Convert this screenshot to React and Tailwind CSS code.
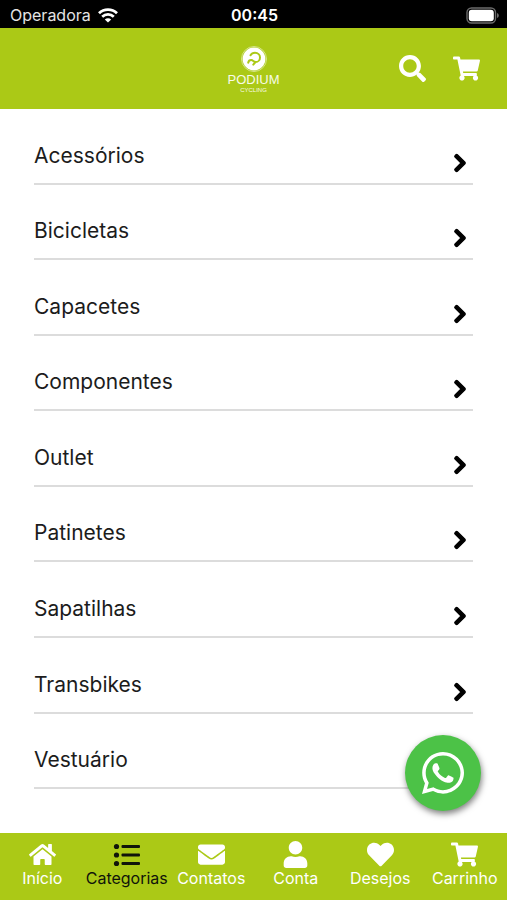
import { useState } from "react";
import {
  FaChevronRight,
  FaEnvelope,
  FaHeart,
  FaHome,
  FaSearch,
  FaShoppingCart,
  FaUser,
  FaWhatsapp,
} from "react-icons/fa";

const categories = [
  "Acessórios",
  "Bicicletas",
  "Capacetes",
  "Componentes",
  "Outlet",
  "Patinetes",
  "Sapatilhas",
  "Transbikes",
  "Vestuário",
];

const tabs = [
  { label: "Início", Icon: FaHome },
  { label: "Categorias", Icon: ListIcon },
  { label: "Contatos", Icon: FaEnvelope },
  { label: "Conta", Icon: FaUser },
  { label: "Desejos", Icon: FaHeart },
  { label: "Carrinho", Icon: FaShoppingCart },
];

function ListIcon({ className }) {
  return (
    <svg viewBox="0 0 27 27" className={className} fill="currentColor">
      <circle cx="3.5" cy="5.5" r="2.6" />
      <circle cx="3.5" cy="14" r="2.6" />
      <circle cx="3.5" cy="22.5" r="2.6" />
      <rect x="8.5" y="4" width="18.5" height="3" rx="1" />
      <rect x="8.5" y="12.5" width="18.5" height="3" rx="1" />
      <rect x="8.5" y="21" width="18.5" height="3" rx="1" />
    </svg>
  );
}

function StatusBar() {
  return (
    <div className="grid h-7 grid-cols-3 items-center bg-black pl-[10px] pr-2 pt-0.5 text-base leading-5 text-[#e4e4e4]">
      <div className="flex items-center gap-[7px]">
        <span>Operadora</span>
        <svg viewBox="0 0 20 15" className="h-[15px] w-5" fill="none" stroke="#fff" strokeWidth="2.8">
          <path d="M1 5.2C6 .4 14 .4 19 5.2" />
          <path d="M4.2 8.7c3.3-3.1 8.3-3.1 11.6 0" />
          <path d="M10 14.6 6.8 11.4c1.8-1.7 4.6-1.7 6.4 0z" fill="#fff" stroke="none" />
        </svg>
      </div>
      <span className="text-center font-semibold text-white">00:45</span>
      <svg viewBox="0 0 33 17" className="h-[17px] w-[33px] justify-self-end">
        <rect x="1" y="1" width="28.5" height="15" rx="4.5" fill="none" stroke="#6b6b6b" strokeWidth="1.4" />
        <rect x="2.8" y="2.8" width="25" height="11.4" rx="3" fill="#fff" />
        <path d="M31 6v5c1.3-.4 1.8-1.3 1.8-2.5S32.3 6.4 31 6z" fill="#6b6b6b" />
      </svg>
    </div>
  );
}

function Logo() {
  return (
    <a href="#inicio" className="flex flex-col items-center text-[#f8fbe6]">
      <svg viewBox="0 0 28 28" className="size-7" fill="none">
        <circle cx="14" cy="14" r="12.5" stroke="#d5e587" strokeWidth="1" />
        <circle cx="14" cy="14" r="11.4" fill="#fff" />
        <path
          d="M10.5 10.2C11.5 8.500 13 7.800 15 7.800c3 0 5 2 5 4.600s-2 4.600-4.200 4.600c-2.400 0-2.600-1.900-4.600-1.900-1.600 0-2.700 1-3 2.600M15.500 17l-2.200 2.600"
          stroke="#abc916"
          strokeWidth="2"
          strokeLinecap="round"
        />
      </svg>
      <span className="font-['Liberation_Sans'] text-[13px] leading-[14px]">PODIUM</span>
      <span className="font-['Liberation_Sans'] text-[6px] leading-[6px]">CYCLING</span>
    </a>
  );
}

function Header() {
  return (
    <header className="grid h-[81px] grid-cols-3 items-center bg-[#abc916] px-[27px] text-white">
      <div className="col-start-2 justify-self-center">
        <Logo />
      </div>
      <div className="flex justify-end gap-[27px]">
        <button type="button" aria-label="Buscar">
          <FaSearch className="size-[27px]" />
        </button>
        <button type="button" aria-label="Carrinho">
          <FaShoppingCart className="size-[27px]" />
        </button>
      </div>
    </header>
  );
}

export default function App() {
  const [active, setActive] = useState("Categorias");

  return (
    <div className="flex min-h-screen flex-col bg-white font-['Inter',sans-serif]">
      <StatusBar />
      <Header />

      <main className="relative flex flex-1 flex-col">
        <ul className="flex flex-1 flex-col px-[34px] pb-11">
          {categories.map((name) => (
            <li key={name} className="flex min-h-14 flex-1 border-b-2 border-[#dcdcdc]">
              <a href="#categoria" className="flex flex-1 items-end justify-between pr-[3px] text-[#1c1c1c]">
                <span className="pb-[13px] text-[21px] leading-7">{name}</span>
                <FaChevronRight className="mb-[10px] size-5 stroke-current stroke-[36] text-black" />
              </a>
            </li>
          ))}
        </ul>

        <a
          href="#whatsapp"
          aria-label="WhatsApp"
          className="absolute bottom-[22px] right-[26px] flex size-[76px] items-center justify-center rounded-full bg-[#4cc247] text-white shadow-[1px_3px_6px_rgba(0,0,0,0.5)]"
        >
          <FaWhatsapp className="size-12" />
        </a>
      </main>

      <nav className="grid h-[67px] grid-cols-6 bg-[#abc916]">
        {tabs.map(({ label, Icon }) => (
          <button
            key={label}
            type="button"
            onClick={() => setActive(label)}
            className={
              active === label
                ? "flex flex-col items-center pt-2 text-[#10140a]"
                : "flex flex-col items-center pt-2 text-white"
            }
          >
            <Icon className="size-[27px]" />
            <span className="text-base leading-5">{label}</span>
          </button>
        ))}
      </nav>
    </div>
  );
}
